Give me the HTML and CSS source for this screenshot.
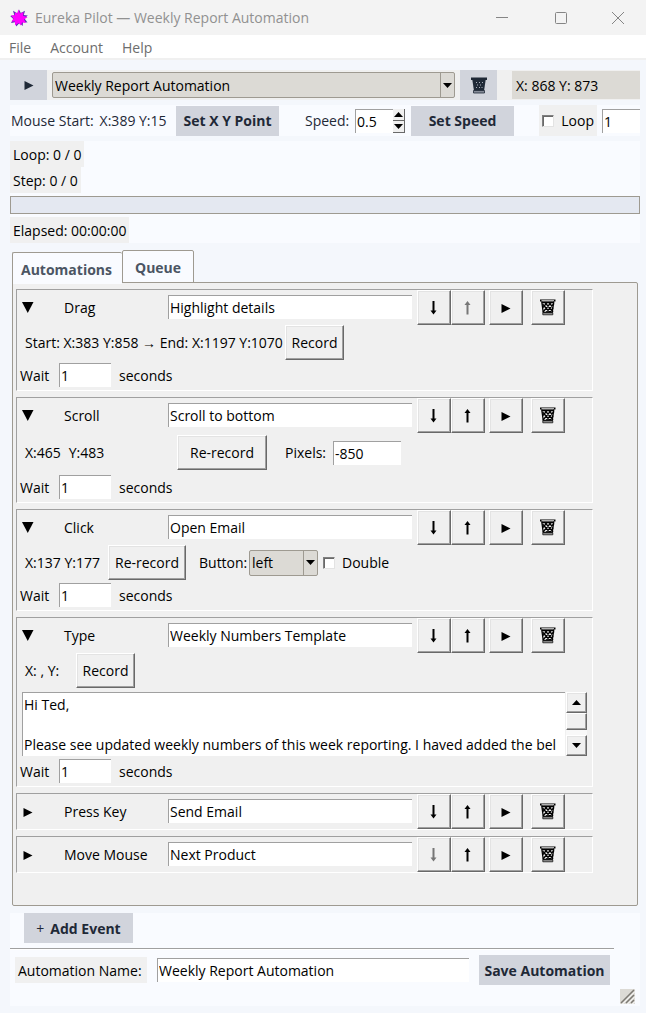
FILE: index.html
```
<!DOCTYPE html>
<html lang="en">
<head>
<meta charset="utf-8">
<meta name="viewport" content="width=device-width, initial-scale=1">
<title>Eureka Pilot — Weekly Report Automation</title>
<link rel="stylesheet" href="styles.css">
</head>
<body>
<svg class="sprite" aria-hidden="true">
  <symbol id="play" viewBox="0 0 10 10"><path d="M.5 1 9.500 5.500 .5 10z" fill="currentColor"/></symbol>
  <symbol id="fold" viewBox="0 0 12 12"><path d="M0 0H11.500L5.750 11z" fill="currentColor"/></symbol>
  <symbol id="caret" viewBox="0 0 9 5"><path d="M0 0H9L4.500 5z" fill="currentColor"/></symbol>
  <symbol id="caret-up" viewBox="0 0 9 5"><path d="M0 5H9L4.500 0z" fill="currentColor"/></symbol>
  <symbol id="down" viewBox="0 0 8 14"><path d="M2.500 0H4.500V9.500L6.500 9.500 3.500 13.500 .5 9.500H2.500z" fill="currentColor"/></symbol>
  <symbol id="up" viewBox="0 0 8 14"><path d="M2.500 13.500H4.500V4L6.500 4 3.500 0 .5 4H2.500z" fill="currentColor"/></symbol>
  <symbol id="bin" viewBox="0 0 16 17"><path d="M0 .5H15.500V2.500H0z" fill="currentColor"/><path d="M1.500 1.500H14" stroke="#ddd" stroke-width=".8"/><path d="M1.700 2.500 3.300 13.500H12.200L13.800 2.500" stroke="currentColor" stroke-width="1.300" fill="none"/><path d="M2 3.500H14M3 13 11.500 3M6.500 13 14 4.500M3 8.500 7.500 3M13 13 4.500 3M9.500 13 2.500 5M13 8.500 8.500 3M10 13 13 9" stroke="currentColor" stroke-width="1.300" fill="none"/><path d="M2.800 13.700H12.800V15.800H2.800z" fill="#999" stroke="currentColor" stroke-width=".7"/></symbol>
  <symbol id="bin-dark" viewBox="0 0 16 17"><path d="M0 .5H16V3H0z" fill="currentColor"/><path d="M1.200 2H14.800L13 14H3z" fill="currentColor"/><path d="M5 5h1v1H5zM8 5h1v1H8zM11 5h1v1h-1zM6 7.500h1v1H6zM9 7.500h1v1H9zM5 10h1v1H5zM8 10h1v1H8zM10.500 10h1v1h-1z" fill="#aab0bc"/><path d="M2.500 13.500H13.500V16H2.500z" fill="#858b98" stroke="currentColor" stroke-width=".8"/></symbol>
</svg>

<header class="titlebar">
  <svg class="logo" viewBox="0 0 18 18" aria-hidden="true"><path d="M9 .5 10.800 4 15 1.800 13.800 6 17.800 6.500 14.500 9.500 17.500 13.500 13 13 12.700 17 9.500 14 6.300 17.500 5.300 13.300 1 14 3.300 10 .2 7 4.300 6.300 3 1.800 7.300 4.300z" fill="#5b2fb5"/><path d="M8.200 .5 10 4.500 13.500 3 13 6.800 17.500 8.300 14 10.500 16 14 12 13.500 11 16.500 8.500 14 5 16.500 5 12.500 1.500 12.500 3.600 9.500 .8 6.500 4.800 6.200 5 3.200 7.400 4.500z" fill="#ff00ff"/></svg>
  <h1 class="title">Eureka Pilot — Weekly Report Automation</h1>
  <div class="window-buttons">
    <button aria-label="Minimize"><svg viewBox="0 0 12 12"><path d="M0 5.500H12"/></svg></button>
    <button aria-label="Maximize"><svg viewBox="0 0 12 12"><rect x=".5" y=".5" width="11" height="11" rx="1"/></svg></button>
    <button aria-label="Close"><svg viewBox="0 0 12 12"><path d="M0 0 12 12M12 0 0 12"/></svg></button>
  </div>
</header>
<nav class="menubar"><button>File</button><button>Account</button><button>Help</button></nav>

<main class="window">
  <div class="picker">
    <button class="flat square" aria-label="Run"><svg class="i-play"><use href="#play"/></svg></button>
    <div class="combo combo-wide">
      <select aria-label="Automation"><option>Weekly Report Automation</option></select>
      <span class="combo-arrow"><svg class="i-caret"><use href="#caret"/></svg></span>
    </div>
    <button class="flat square" aria-label="Delete automation"><svg class="i-bin"><use href="#bin-dark"/></svg></button>
    <output class="position">X: 868 Y: 873</output>
  </div>

  <div class="settings">
    <span class="mouse-start"><span>Mouse Start:</span><span>X:389 Y:15</span></span>
    <button class="flat setter">Set X Y Point</button>
    <label class="speed-label" for="speed">Speed:</label>
    <div class="spin">
      <input id="speed" class="entry" value="0.5">
      <div class="spin-buttons">
        <button aria-label="Faster"><svg class="i-caret"><use href="#caret-up"/></svg></button>
        <button aria-label="Slower"><svg class="i-caret"><use href="#caret"/></svg></button>
      </div>
    </div>
    <button class="flat setter">Set Speed</button>
    <label class="check loop"><input type="checkbox">Loop</label>
    <input class="entry loop-count" aria-label="Loop count" value="1">
  </div>

  <section class="status">
    <span class="tag">Loop: 0 / 0</span>
    <span class="tag">Step: 0 / 0</span>
    <div class="progress" role="progressbar" aria-label="Progress" aria-valuenow="0"></div>
    <span class="tag">Elapsed: 00:00:00</span>
  </section>

  <div class="tabs" role="tablist">
    <button class="tab tab-current" role="tab" aria-selected="true">Automations</button>
    <button class="tab" role="tab" aria-selected="false">Queue</button>
  </div>
  <section class="pane" role="tabpanel">
    <article class="event">
      <div class="head">
        <button class="toggle" aria-label="Collapse"><svg class="i-fold"><use href="#fold"/></svg></button>
        <span class="kind">Drag</span>
        <input class="entry name" aria-label="Event name" value="Highlight details">
        <div class="pair">
          <button class="raised" aria-label="Move down"><svg class="i-arrow"><use href="#down"/></svg></button>
          <button class="raised" aria-label="Move up" disabled><svg class="i-arrow"><use href="#up"/></svg></button>
        </div>
        <button class="raised" aria-label="Play event"><svg class="i-play"><use href="#play"/></svg></button>
        <button class="raised bin" aria-label="Delete event"><svg class="i-bin"><use href="#bin"/></svg></button>
      </div>
      <div class="detail">
        <span class="coords coords-drag">Start: X:383 Y:858 → End: X:1197 Y:1070</span>
        <button class="raised record">Record</button>
      </div>
      <div class="wait"><label for="w1">Wait</label><input id="w1" class="entry" value="1"><span>seconds</span></div>
    </article>

    <article class="event">
      <div class="head">
        <button class="toggle" aria-label="Collapse"><svg class="i-fold"><use href="#fold"/></svg></button>
        <span class="kind">Scroll</span>
        <input class="entry name" aria-label="Event name" value="Scroll to bottom">
        <div class="pair">
          <button class="raised" aria-label="Move down"><svg class="i-arrow"><use href="#down"/></svg></button>
          <button class="raised" aria-label="Move up"><svg class="i-arrow"><use href="#up"/></svg></button>
        </div>
        <button class="raised" aria-label="Play event"><svg class="i-play"><use href="#play"/></svg></button>
        <button class="raised bin" aria-label="Delete event"><svg class="i-bin"><use href="#bin"/></svg></button>
      </div>
      <div class="detail detail-roomy">
        <span class="coords coords-scroll"><span>X:465</span><span>Y:483</span></span>
        <button class="raised record rerecord-wide">Re-record</button>
        <label class="pixels-label" for="pixels">Pixels:</label>
        <input id="pixels" class="entry pixels" value="-850">
      </div>
      <div class="wait"><label for="w2">Wait</label><input id="w2" class="entry" value="1"><span>seconds</span></div>
    </article>

    <article class="event">
      <div class="head">
        <button class="toggle" aria-label="Collapse"><svg class="i-fold"><use href="#fold"/></svg></button>
        <span class="kind">Click</span>
        <input class="entry name" aria-label="Event name" value="Open Email">
        <div class="pair">
          <button class="raised" aria-label="Move down"><svg class="i-arrow"><use href="#down"/></svg></button>
          <button class="raised" aria-label="Move up"><svg class="i-arrow"><use href="#up"/></svg></button>
        </div>
        <button class="raised" aria-label="Play event"><svg class="i-play"><use href="#play"/></svg></button>
        <button class="raised bin" aria-label="Delete event"><svg class="i-bin"><use href="#bin"/></svg></button>
      </div>
      <div class="detail">
        <span class="coords coords-click">X:137 Y:177</span>
        <button class="raised record rerecord">Re-record</button>
        <label class="button-label" for="mouse-button">Button:</label>
        <div class="combo combo-small">
          <select id="mouse-button"><option>left</option><option>right</option></select>
          <span class="combo-arrow"><svg class="i-caret"><use href="#caret"/></svg></span>
        </div>
        <label class="check double"><input type="checkbox">Double</label>
      </div>
      <div class="wait"><label for="w3">Wait</label><input id="w3" class="entry" value="1"><span>seconds</span></div>
    </article>

    <article class="event">
      <div class="head">
        <button class="toggle" aria-label="Collapse"><svg class="i-fold"><use href="#fold"/></svg></button>
        <span class="kind">Type</span>
        <input class="entry name" aria-label="Event name" value="Weekly Numbers Template">
        <div class="pair">
          <button class="raised" aria-label="Move down"><svg class="i-arrow"><use href="#down"/></svg></button>
          <button class="raised" aria-label="Move up"><svg class="i-arrow"><use href="#up"/></svg></button>
        </div>
        <button class="raised" aria-label="Play event"><svg class="i-play"><use href="#play"/></svg></button>
        <button class="raised bin" aria-label="Delete event"><svg class="i-bin"><use href="#bin"/></svg></button>
      </div>
      <div class="detail">
        <span class="coords coords-type">X: , Y:</span>
        <button class="raised record">Record</button>
      </div>
      <div class="message">
        <textarea class="entry" aria-label="Text to type" wrap="off">Hi Ted,

Please see updated weekly numbers of this week reporting. I haved added the bel</textarea>
        <div class="scrollbar">
          <button class="raised" aria-label="Scroll up"><svg class="i-caret"><use href="#caret-up"/></svg></button>
          <div class="thumb"></div>
          <button class="raised" aria-label="Scroll down"><svg class="i-caret"><use href="#caret"/></svg></button>
        </div>
      </div>
      <div class="wait"><label for="w4">Wait</label><input id="w4" class="entry" value="1"><span>seconds</span></div>
    </article>

    <article class="event">
      <div class="head">
        <button class="toggle" aria-label="Expand"><svg class="i-play"><use href="#play"/></svg></button>
        <span class="kind">Press Key</span>
        <input class="entry name" aria-label="Event name" value="Send Email">
        <div class="pair">
          <button class="raised" aria-label="Move down"><svg class="i-arrow"><use href="#down"/></svg></button>
          <button class="raised" aria-label="Move up"><svg class="i-arrow"><use href="#up"/></svg></button>
        </div>
        <button class="raised" aria-label="Play event"><svg class="i-play"><use href="#play"/></svg></button>
        <button class="raised bin" aria-label="Delete event"><svg class="i-bin"><use href="#bin"/></svg></button>
      </div>
    </article>

    <article class="event">
      <div class="head">
        <button class="toggle" aria-label="Expand"><svg class="i-play"><use href="#play"/></svg></button>
        <span class="kind">Move Mouse</span>
        <input class="entry name" aria-label="Event name" value="Next Product">
        <div class="pair">
          <button class="raised" aria-label="Move down" disabled><svg class="i-arrow"><use href="#down"/></svg></button>
          <button class="raised" aria-label="Move up"><svg class="i-arrow"><use href="#up"/></svg></button>
        </div>
        <button class="raised" aria-label="Play event"><svg class="i-play"><use href="#play"/></svg></button>
        <button class="raised bin" aria-label="Delete event"><svg class="i-bin"><use href="#bin"/></svg></button>
      </div>
    </article>
  </section>

  <footer class="footer">
    <button class="flat add"><span class="plus">+</span> Add Event</button>
    <hr class="rule">
    <div class="save-row">
      <label class="tag" for="automation-name">Automation Name:</label>
      <input id="automation-name" class="entry" value="Weekly Report Automation">
      <button class="flat save">Save Automation</button>
    </div>
    <svg class="grip" viewBox="0 0 15 15" aria-hidden="true"><path fill="#dcdad5" d="M0 0H15V15H0z"/><path d="M1 14 14 1M6 14 14 6M11 14 14 11" stroke="#7d7a74" stroke-width="1.500"/><path d="M2.500 15 15 2.500M7.500 15 15 7.500M12.500 15 15 12.500" stroke="#fff"/></svg>
  </footer>
</main>
</body>
</html>
```
FILE: styles.css
```
* { box-sizing: border-box; }

body {
  margin: 0;
  min-height: 100vh;
  display: flex;
  flex-direction: column;
  background: #f4f7fc;
  color: #000;
  font: 14px/20px "Open Sans", "Noto Sans", sans-serif;
}

button, input, select, textarea {
  margin: 0;
  padding: 0;
  border: 0;
  border-radius: 0;
  background: none;
  color: inherit;
  font: inherit;
}

button { display: flex; align-items: center; justify-content: center; white-space: nowrap; }
span, label { white-space: nowrap; }

.sprite { position: absolute; width: 0; height: 0; }
.i-play { width: 10px; height: 10px; }
.i-fold { width: 12px; height: 12px; }
.i-caret { width: 9px; height: 5px; }
.i-arrow { width: 8px; height: 14px; }
.i-bin { width: 16px; height: 17px; }

/* Title bar and menu */
.titlebar {
  display: flex;
  align-items: center;
  height: 35px;
  padding-left: 10px;
  background: #f3f3f3;
  color: #919191;
}
.logo { width: 18px; height: 18px; margin-right: 7px; }
.title { margin: 0; font-size: 14px; font-weight: 400; }
.window-buttons { display: flex; margin-left: auto; }
.window-buttons button { width: 59px; height: 30px; }
.window-buttons button:last-child { width: 56px; }
.window-buttons svg {
  width: 12px;
  height: 12px;
  overflow: visible;
  fill: none;
  stroke: #858585;
}
.menubar {
  display: flex;
  gap: 19px;
  height: 25px;
  padding: 2px 9px 0;
  background: #fff;
  border-bottom: 2px solid #f0f0f0;
  color: #6d6d6d;
}

.window { flex: 1; display: flex; flex-direction: column; padding: 10px 6px 7px 10px; }

/* Shared widgets */
.flat { height: 30px; background: #d1d4dc; color: #1f2937; font-weight: 700; }
.square { width: 37px; flex: none; }
.entry {
  min-width: 0;
  height: 24px;
  padding: 0 1px;
  border-top: 1px solid #a0a0a0;
  border-left: 1px solid #a0a0a0;
  background: #fff;
}
.raised {
  flex: none;
  width: 34px;
  height: 35px;
  background: #f0f0f0;
  border: 1px solid;
  border-color: #fff #696969 #696969 #fff;
  box-shadow: inset -1px -1px #a0a0a0, inset 1px 1px #e3e3e3;
}
.raised:disabled { color: #777; }
.combo {
  position: relative;
  height: 26px;
  border: 1px solid #9e9a91;
  border-radius: 2px;
  background: #dcdad5;
}
.combo select { width: 100%; height: 100%; padding-left: 2px; appearance: none; }
.combo-arrow {
  position: absolute;
  inset: 0 0 0 auto;
  width: 14px;
  display: flex;
  align-items: center;
  justify-content: center;
  border-left: 1px solid #9e9a91;
  pointer-events: none;
}
.check { display: flex; align-items: center; gap: 7px; }
.check input {
  width: 12px;
  height: 12px;
  appearance: none;
  background: #fff;
  border: 1px solid;
  border-color: #808080 #e3e3e3 #e3e3e3 #808080;
  box-shadow: inset 1px 1px #696969;
}
.tag { padding: 4px 3px 2px; background: #f0f0f0; }

/* Toolbar */
.picker { display: flex; align-items: center; background: #f0f0f0; }
.combo-wide { flex: 1; margin: 0 5px; }
.combo-wide select { padding-top: 1px; }
.position {
  width: 128px;
  height: 28px;
  margin-left: 15px;
  padding: 5px 4px 3px;
  background: #dcdad5;
}
.settings {
  display: flex;
  align-items: center;
  height: 31px;
  margin-top: 5px;
  background: #f9fbff;
}
.mouse-start {
  display: flex;
  gap: 6px;
  width: 166px;
  padding-left: 1px;
  color: #1f2937;
}
.setter { width: 103px; flex: none; }
.speed-label { width: 76px; padding-left: 26px; color: #1f2937; }
.spin { display: flex; width: 50px; margin-right: 6px; background: #fff; }
.spin .entry { flex: 1; }
.spin-buttons { display: flex; flex-direction: column; }
.spin-buttons button {
  width: 12px;
  height: 12px;
  background: #f0f0f0;
  border-right: 1px solid #696969;
  border-bottom: 1px solid #696969;
}
.loop { height: 31px; margin-left: auto; padding: 0 3px; background: #f0f0f0; }
.loop-count { width: 38px; margin-left: 5px; }

/* Run status */
.status {
  display: flex;
  flex-direction: column;
  align-items: flex-start;
  margin-top: 5px;
  background: #f9fbff;
}
.progress {
  width: 100%;
  height: 18px;
  margin: 3px 0;
  border: 1px solid #9e9a91;
  background: #e4e8f1;
}

/* Notebook */
.tabs { display: flex; align-items: flex-end; margin: 7px 0 0 2px; }
.tab {
  height: 33px;
  padding: 2px 12px 0;
  border: 1px solid #9e9a91;
  border-radius: 2px 2px 0 0;
  background: #f9fbff;
  color: #4b5563;
  font-weight: 700;
}
.tab-current {
  z-index: 1;
  height: 32px;
  margin-bottom: -1px;
  padding: 2px 10px 0 8px;
  border-width: 1px 0 0 1px;
}
.pane {
  flex: 1;
  display: flex;
  flex-direction: column;
  gap: 6px;
  margin: -1px 2px 0;
  padding: 6px 44px 6px 3px;
  border: 1px solid #9e9a91;
  border-radius: 0 2px 2px 2px;
  background: #f0f0f0;
}
.event { border: 1px solid; border-color: #a0a0a0 #fff #fff #a0a0a0; }
.head { display: flex; }
.toggle { width: 47px; padding-left: 5px; justify-content: flex-start; }
.toggle .i-play { margin-left: 1px; }
.kind { width: 104px; padding-top: 8px; }
.name { flex: 1; margin: 5px 5px 0 0; }
.pair { display: flex; margin-right: 4px; }
.bin { margin: 0 27px 0 8px; }
.detail { display: flex; align-items: center; padding-left: 8px; }
.detail-roomy { margin: 2px 0; }
.record { width: 59px; }
.coords-drag { width: 260px; }
.coords-scroll { display: flex; gap: 8px; width: 152px; }
.coords-click { width: 83px; }
.coords-type { width: 51px; }
.rerecord { width: 78px; }
.rerecord-wide { width: 90px; }
.pixels-label { width: 66px; padding-left: 18px; }
.pixels { width: 68px; }
.button-label { width: 63px; padding-left: 13px; }
.combo-small { width: 69px; margin-right: 5px; }
.wait { display: flex; align-items: center; padding: 3px; }
.wait label, .wait span { padding-top: 2px; }
.wait label { width: 39px; }
.wait .entry { width: 52px; margin-right: 8px; }
.message { display: flex; height: 64px; margin: 4px 5px 0; }
.message .entry {
  flex: 1;
  height: 64px;
  padding-top: 2px;
  resize: none;
  overflow: hidden;
}
.scrollbar {
  display: flex;
  flex-direction: column;
  width: 21px;
  margin-left: 1px;
  background: #f8f8f8;
}
.scrollbar .raised { width: 21px; height: 21px; }
.thumb {
  height: 17px;
  margin-bottom: auto;
  background: #f0f0f0;
  border: 1px solid;
  border-color: #fff #696969 #696969 #fff;
  box-shadow: inset -1px -1px #a0a0a0;
}

/* Footer */
.footer { position: relative; height: 93px; margin-top: 7px; background: #f9fbff; }
.add { width: 109px; margin-left: 14px; padding-top: 2px; gap: 6px; }
.plus { font-weight: 400; }
.rule {
  height: 2px;
  margin: 5px 26px 5px 0;
  border: 0;
  border-top: 1px solid #a0a0a0;
  border-bottom: 1px solid #fff;
}
.save-row { display: flex; align-items: center; margin: 0 30px 0 5px; }
.save-row .tag { width: 132px; margin-right: 10px; }
.save-row .entry { flex: 1; margin-right: 10px; }
.save { width: 131px; padding-top: 2px; }
.grip { position: absolute; right: 5px; bottom: 2px; width: 15px; height: 15px; }
```
